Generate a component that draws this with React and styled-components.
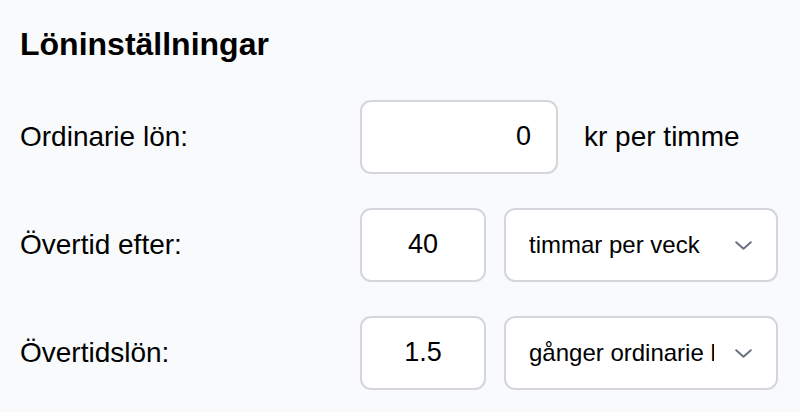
import React from 'react';
import styled, { createGlobalStyle } from 'styled-components';

const GlobalStyle = createGlobalStyle`
  html, body {
    margin: 0;
    padding: 0;
    background: #f9fafb;
  }
  body {
    font-family: 'Liberation Sans', Arial, Helvetica, sans-serif;
    color: #000;
  }
`;

const Page = styled.div`
  padding: 26px 20px;
`;

const Heading = styled.h2`
  margin: 0 0 37px;
  font-size: 32px;
  line-height: 1.15;
  font-weight: 700;
`;

const Form = styled.div`
  display: grid;
  row-gap: 34px;
`;

const Row = styled.div`
  display: grid;
  grid-template-columns: 340px 1fr;
  align-items: center;
`;

const Label = styled.label`
  font-size: 28px;
`;

const Fields = styled.div`
  display: flex;
  align-items: center;
  gap: 18px;
`;

const NumberInput = styled.input`
  box-sizing: border-box;
  width: ${({ wide }) => (wide ? '198px' : '126px')};
  height: 74px;
  padding: 0 ${({ wide }) => (wide ? '25px' : '10px')};
  border: 2px solid #d4d6db;
  border-radius: 11px;
  background: #fff;
  font-family: inherit;
  font-size: 27px;
  color: #000;
  text-align: ${({ wide }) => (wide ? 'right' : 'center')};
  outline: none;
`;

const Unit = styled.span`
  margin-left: 8px;
  font-size: 28px;
`;

const SelectWrap = styled.div`
  position: relative;
  width: 274px;
  height: 74px;
`;

const Select = styled.select`
  appearance: none;
  box-sizing: border-box;
  width: 100%;
  height: 100%;
  padding: 0 62px 0 23px;
  border: 2px solid #d4d6db;
  border-radius: 11px;
  background: #fff;
  font-family: inherit;
  font-size: 24px;
  color: #000;
  outline: none;
`;

const Chevron = styled.svg`
  position: absolute;
  right: 26px;
  top: 50%;
  margin-top: -4px;
  pointer-events: none;
`;

const ChevronIcon = () => (
  <Chevron width="17" height="9" viewBox="0 0 17 9" fill="none">
    <polyline
      points="1.2,1.2 8.5,7.8 15.8,1.2"
      stroke="#6b7280"
      strokeWidth="2"
      strokeLinecap="round"
      strokeLinejoin="round"
    />
  </Chevron>
);

const App = () => (
  <Page>
    <GlobalStyle />
    <Heading>Löninställningar</Heading>
    <Form>
      <Row>
        <Label>Ordinarie lön:</Label>
        <Fields>
          <NumberInput wide type="text" defaultValue="0" />
          <Unit>kr per timme</Unit>
        </Fields>
      </Row>
      <Row>
        <Label>Övertid efter:</Label>
        <Fields>
          <NumberInput type="text" defaultValue="40" />
          <SelectWrap>
            <Select defaultValue="week">
              <option value="week">timmar per veck</option>
              <option value="day">timmar per dag</option>
            </Select>
            <ChevronIcon />
          </SelectWrap>
        </Fields>
      </Row>
      <Row>
        <Label>Övertidslön:</Label>
        <Fields>
          <NumberInput type="text" defaultValue="1.5" />
          <SelectWrap>
            <Select defaultValue="times">
              <option value="times">gånger ordinarie lön</option>
              <option value="kr">kr per timme</option>
            </Select>
            <ChevronIcon />
          </SelectWrap>
        </Fields>
      </Row>
    </Form>
  </Page>
);

export default App;
